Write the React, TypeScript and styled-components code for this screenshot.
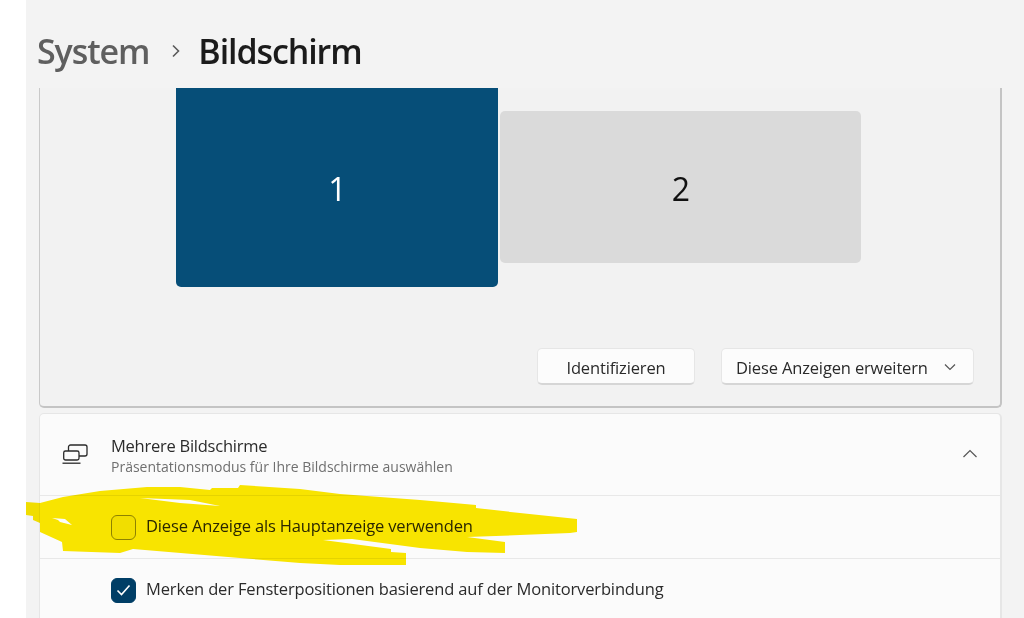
import React from "react";
import styled, { createGlobalStyle } from "styled-components";

const Global = createGlobalStyle`
  html, body { margin: 0; padding: 0; background: #ffffff; }
  body { width: 1024px; height: 618px; overflow: hidden; font-family: "Open Sans", "Noto Sans", sans-serif; }
`;

const Window = styled.div`
  position: relative;
  width: 1024px;
  height: 618px;
  padding-left: 26px;
  box-sizing: border-box;
  overflow: hidden;
`;

const Main = styled.main`
  height: 100%;
  background: #f3f3f3;
  padding-left: 13px;
  padding-right: 22px;
  display: flex;
  flex-direction: column;
  overflow: hidden;
`;

const Breadcrumb = styled.header`
  flex: none;
  height: 88px;
  margin-left: -2px;
  display: flex;
  align-items: center;
  padding-top: 13px;
  box-sizing: border-box;
`;

const Crumb = styled.span<{ $current?: boolean }>`
  font-size: 34px;
  font-weight: 600;
  line-height: 42px;
  letter-spacing: -1.1px;
  color: ${(p) => (p.$current ? "#1b1b1b" : "#5f5f5f")};
`;

const CrumbSep = styled.svg`
  width: 10px;
  height: 16px;
  margin: 0 17px 0 22px;
  flex: none;
`;

const ArrangePanel = styled.section`
  flex: none;
  height: 320px;
  box-sizing: border-box;
  border: 1px solid #c4c4c4;
  border-width: 0 2px 2px 1px;
  border-left-color: #c9c9c9;
  border-radius: 0 0 5px 5px;
  background: #f2f2f2;
  display: flex;
  flex-direction: column;
  overflow: hidden;
`;

const Stage = styled.div`
  flex: 1;
  display: flex;
  align-items: flex-start;
  gap: 2px;
  padding-left: 136px;
`;

const Monitor = styled.div<{ $active?: boolean }>`
  flex: none;
  width: ${(p) => (p.$active ? "322px" : "361px")};
  height: ${(p) => (p.$active ? "209px" : "152px")};
  margin-top: ${(p) => (p.$active ? "-10px" : "23px")};
  border-radius: 5px;
  background: ${(p) => (p.$active ? "#064e78" : "#dadada")};
  color: ${(p) => (p.$active ? "#ffffff" : "#111111")};
  display: flex;
  align-items: center;
  justify-content: center;
  font-size: 32px;
  padding-top: ${(p) => (p.$active ? "11px" : "3px")};
  padding-left: 1px;
  box-sizing: border-box;
`;

const Actions = styled.div`
  flex: none;
  display: flex;
  justify-content: flex-end;
  gap: 26px;
  padding: 0 26px 21px 0;
`;

const Button = styled.button<{ $wide?: boolean }>`
  width: ${(p) => (p.$wide ? "253px" : "158px")};
  height: 37px;
  box-sizing: border-box;
  background: #fcfcfc;
  border: 1px solid #e6e6e6;
  border-bottom: 2px solid #d6d6d6;
  border-radius: 5px;
  color: #2a2a2a;
  font-family: "Open Sans", sans-serif;
  font-size: 16.5px;
  letter-spacing: -0.15px;
  display: flex;
  align-items: center;
  justify-content: ${(p) => (p.$wide ? "space-between" : "center")};
  padding: ${(p) => (p.$wide ? "2px 17px 0 14px" : "2px 0 0")};
`;

const Card = styled.section`
  flex: none;
  margin-top: 5px;
  box-sizing: border-box;
  border: 1px solid #e6e6e6;
  border-width: 1px 2px 0 1px;
  border-radius: 5px 5px 0 0;
  background: #fbfbfb;
`;

const CardHeader = styled.div`
  height: 81px;
  box-sizing: border-box;
  display: flex;
  align-items: center;
  padding: 0 22px;
`;

const DevicesIcon = styled.svg`
  flex: none;
  margin-bottom: 1px;
`;

const ChevronUp = styled.svg`
  flex: none;
  margin-bottom: 2px;
`;

const HeaderText = styled.div`
  flex: 1;
  margin-left: 23px;
  padding-top: 2px;
  display: flex;
  flex-direction: column;
`;

const Title = styled.div`
  font-size: 16.5px;
  line-height: 22px;
  letter-spacing: -0.25px;
  color: #2b2b2b;
`;

const Subtitle = styled.div`
  font-size: 14px;
  line-height: 20px;
  color: #6f6f6f;
`;

const OptionRow = styled.label`
  height: 63px;
  box-sizing: border-box;
  border-top: 1px solid #e8e8e8;
  padding-left: 71px;
  display: flex;
  align-items: center;
  gap: 10px;
  font-size: 16.5px;
  letter-spacing: -0.15px;
  color: #2b2b2b;
`;

const OptionText = styled.span`
  margin-bottom: 4px;
`;

const Check = styled.span<{ $on?: boolean }>`
  flex: none;
  width: 25px;
  height: 25px;
  box-sizing: border-box;
  border-radius: 6px;
  border: 1px solid ${(p) => (p.$on ? "#003e66" : "#8f8f8f")};
  background: ${(p) => (p.$on ? "#003e66" : "#f4f4f4")};
  display: flex;
  align-items: center;
  justify-content: center;
`;

const Marker = styled.svg`
  position: absolute;
  left: 0;
  top: 0;
  width: 1024px;
  height: 618px;
  mix-blend-mode: multiply;
  pointer-events: none;
`;

export default function App() {
  return (
    <Window>
      <Global />
      <Main>
        <Breadcrumb>
          <Crumb>System</Crumb>
          <CrumbSep viewBox="0 0 10 16" fill="none" stroke="#5a5a5a" strokeWidth="1.6">
            <path d="M2 2.5l5.5 5.5L2 13.5" />
          </CrumbSep>
          <Crumb $current>Bildschirm</Crumb>
        </Breadcrumb>

        <ArrangePanel>
          <Stage>
            <Monitor $active>1</Monitor>
            <Monitor>2</Monitor>
          </Stage>
          <Actions>
            <Button>Identifizieren</Button>
            <Button $wide>
              Diese Anzeigen erweitern
              <svg width="12" height="8" viewBox="0 0 12 8" fill="none" stroke="#555" strokeWidth="1.2">
                <path d="M1 1.5l5 5 5-5" />
              </svg>
            </Button>
          </Actions>
        </ArrangePanel>

        <Card>
          <CardHeader>
            <DevicesIcon width="26" height="22" viewBox="0 0 26 22" fill="none" stroke="#2a2a2a" strokeWidth="1.3">
              <path d="M6.5 8V4a2 2 0 0 1 2-2H23a2 2 0 0 1 2 2v7a2 2 0 0 1-2 2h-6" />
              <rect x="1.7" y="8" width="15.3" height="9" rx="1.8" />
              <path d="M0.5 20.2h18" />
            </DevicesIcon>
            <HeaderText>
              <Title>Mehrere Bildschirme</Title>
              <Subtitle>Präsentationsmodus für Ihre Bildschirme auswählen</Subtitle>
            </HeaderText>
            <ChevronUp width="16" height="9" viewBox="0 0 16 9" fill="none" stroke="#555" strokeWidth="1.2">
              <path d="M1.5 8L8 1.5 14.5 8" />
            </ChevronUp>
          </CardHeader>
          <OptionRow>
            <Check />
            <OptionText>Diese Anzeige als Hauptanzeige verwenden</OptionText>
          </OptionRow>
          <OptionRow>
            <Check $on>
              <svg width="15" height="12" viewBox="0 0 15 12" fill="none" stroke="#fff" strokeWidth="1.6">
                <path d="M1.5 6.5l4 4 8-9" />
              </svg>
            </Check>
            <OptionText>Merken der Fensterpositionen basierend auf der Monitorverbindung</OptionText>
          </OptionRow>
        </Card>
      </Main>

      <Marker viewBox="0 0 1024 618">
        <path
          fill="#fce800"
          fillRule="evenodd"
          d="M26 502L40 503L63 497L100 491L147 487L180 487L210 490L212 488L238 488L240 485L300 489L340 494L420 500L476 505L476 508L520 513L577 519L577 532L570 533L520 535L467 537L505 542L505 553L467 552L420 548L352 539L323 540L391 549L391 552L406 553L406 565L340 565L300 563L240 558L133 549L120 553L63 551L62 542L40 532L40 523L33 520L33 516L26 515Z
             M140 498L190 500L220 506L180 503Z
             M52 518L65 519L72 525L60 522L58 520Z"
        />
      </Marker>
    </Window>
  );
}
